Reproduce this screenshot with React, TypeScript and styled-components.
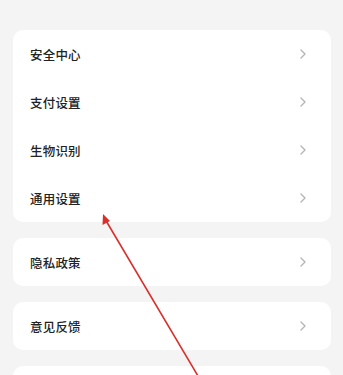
import styled, { createGlobalStyle } from 'styled-components';

const GlobalStyle = createGlobalStyle`
  html, body {
    margin: 0;
    padding: 0;
    background: #f4f4f4;
  }
  body {
    font-family: "Noto Sans CJK SC", "Noto Sans", sans-serif;
  }
`;

const groups = [
  ['安全中心', '支付设置', '生物识别', '通用设置'],
  ['隐私政策'],
  ['意见反馈'],
];

const Chevron = () => (
  <svg width="6" height="10" viewBox="0 0 6 10" fill="none">
    <polyline
      points="1,1 5,5 1,9"
      stroke="#b3b3b3"
      strokeWidth="1.3"
      strokeLinecap="round"
      strokeLinejoin="round"
    />
  </svg>
);

export default function App() {
  return (
    <>
      <GlobalStyle />
      <Page>
        {groups.map((items, i) => (
          <Card key={i}>
            {items.map((label) => (
              <Row key={label}>
                <Label>{label}</Label>
                <Chevron />
              </Row>
            ))}
          </Card>
        ))}
        {/* next group starts just below the fold */}
        <Card>
          <Row />
        </Card>
        <Arrow width="343" height="375" viewBox="0 0 343 375">
          <line x1="105" y1="219" x2="198" y2="376" stroke="#d9302c" strokeWidth="1.6" />
          <polygon points="103,214 102.5,225 110,221" fill="#d9302c" />
        </Arrow>
      </Page>
    </>
  );
}

const Page = styled.div`
  position: relative;
  height: 375px;
  overflow: hidden;
  padding: 30px 12px 0 13px;
  box-sizing: border-box;
  display: flex;
  flex-direction: column;
  gap: 16px;
`;

const Card = styled.div`
  background: #ffffff;
  border-radius: 10px;
  flex-shrink: 0;
`;

const Row = styled.div`
  height: 48px;
  display: flex;
  align-items: center;
  justify-content: space-between;
  padding: 0 25px 0 17px;
`;

const Label = styled.span`
  font-size: 12.5px;
  font-weight: 500;
  color: #222222;
  letter-spacing: 0.2px;
`;

const Arrow = styled.svg`
  position: absolute;
  left: 0;
  top: 0;
  pointer-events: none;
`;
